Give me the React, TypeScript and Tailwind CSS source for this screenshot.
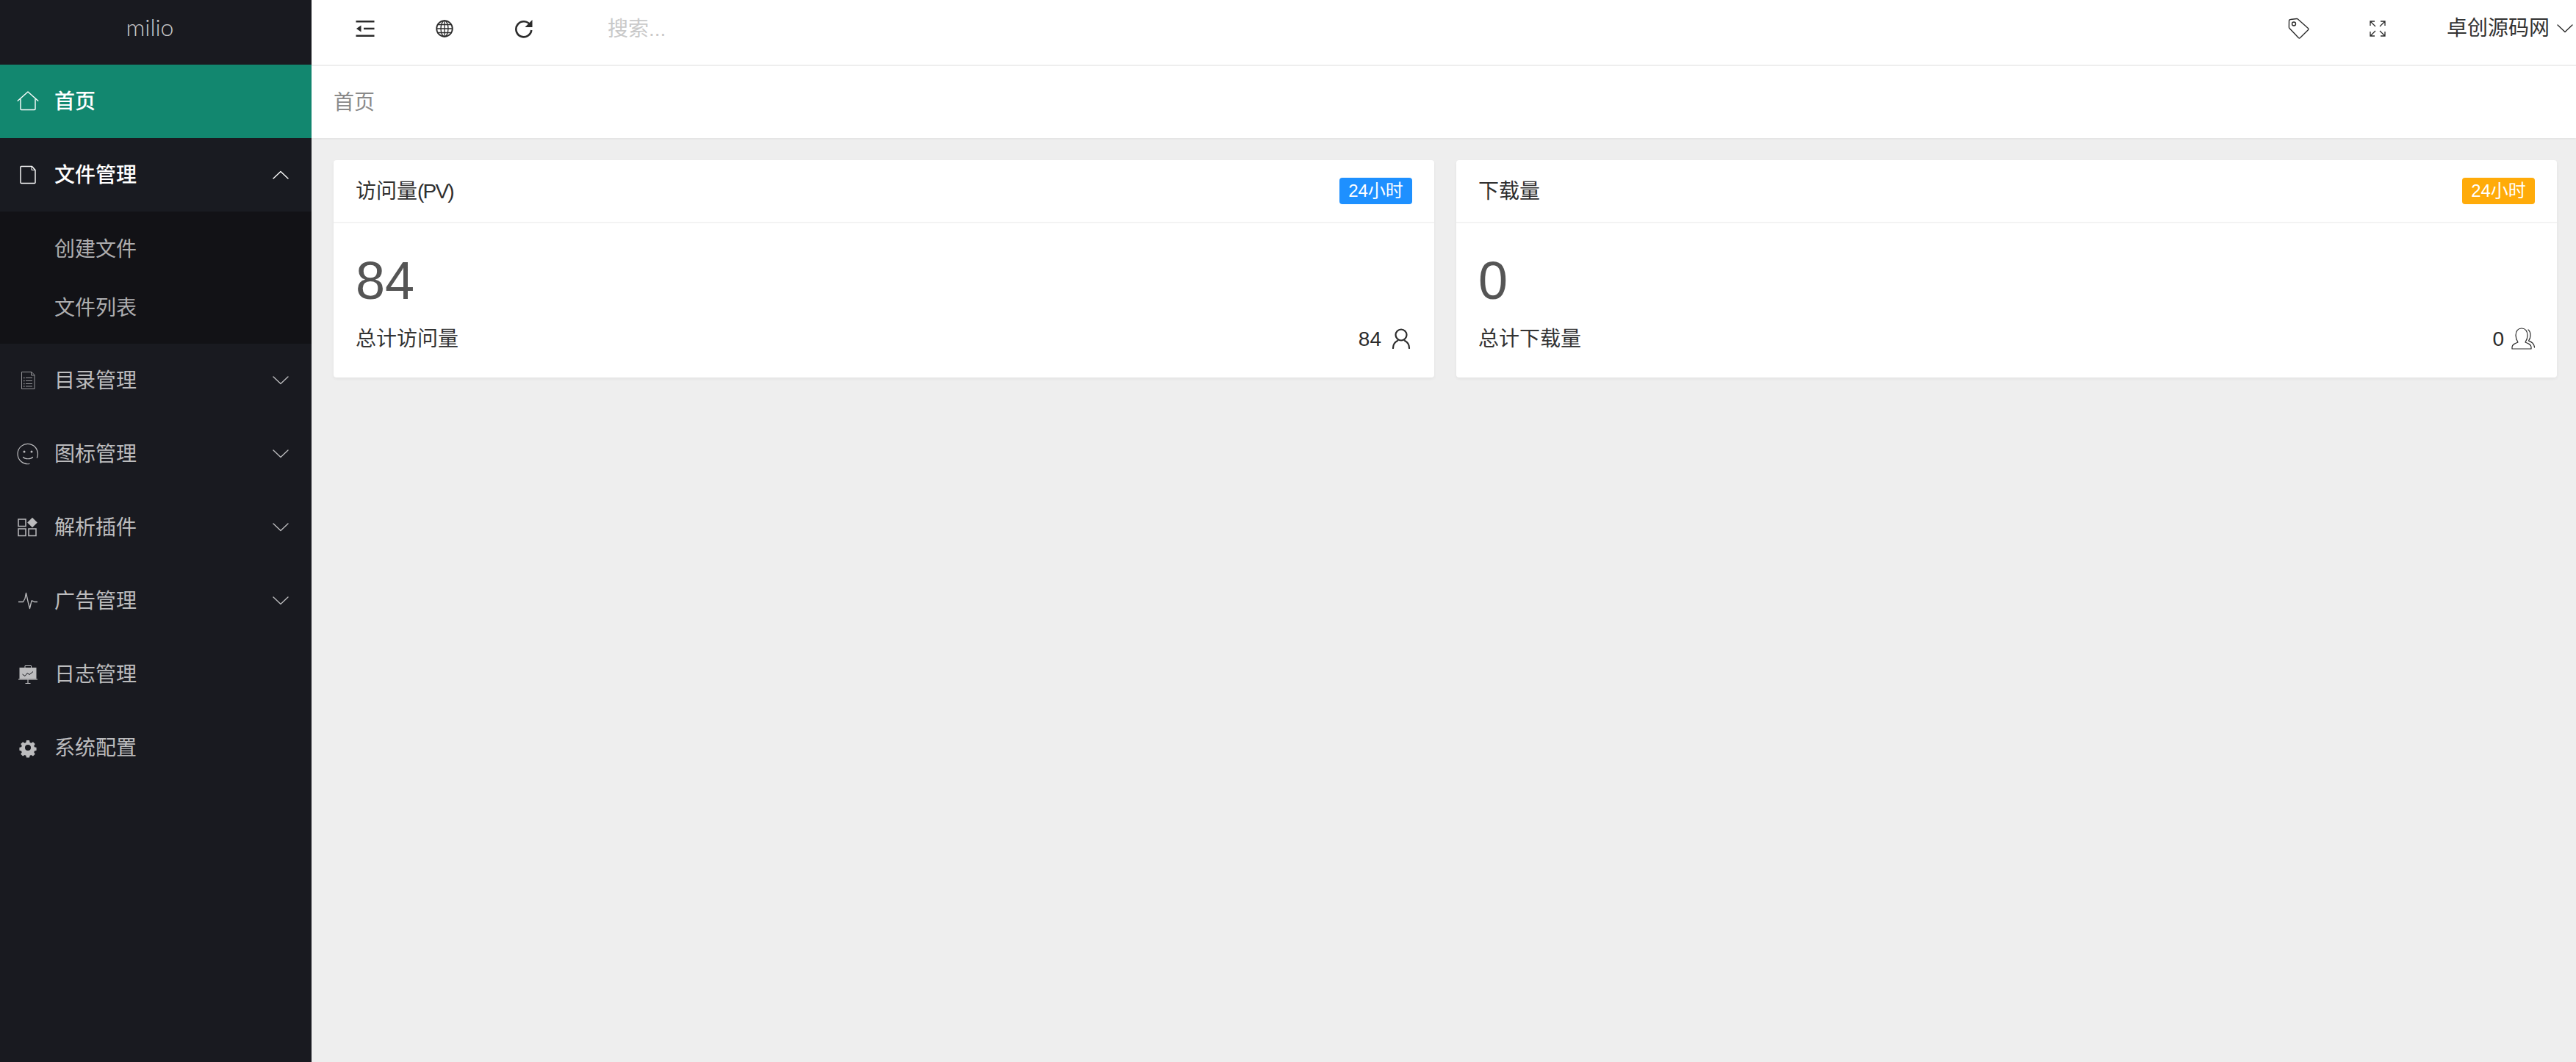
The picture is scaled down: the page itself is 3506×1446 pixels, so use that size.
import type { ReactNode } from 'react';

const svg = 'w-[30px] h-[30px] shrink-0';

const HomeIcon = () => (
  <svg viewBox="0 0 30 30" className={svg} fill="none" stroke="currentColor" strokeWidth="1.4">
    <path d="M1.2 14.2 15 2 28.8 14.2" strokeLinecap="round" strokeLinejoin="round" />
    <path d="M5 11.5V25.5a1 1 0 0 0 1 1h18a1 1 0 0 0 1-1V11.5" />
  </svg>
);
const FileIcon = () => (
  <svg viewBox="0 0 30 30" className={svg} fill="none" stroke="currentColor" strokeWidth="1.4">
    <path d="M5 4.5a1 1 0 0 1 1-1h14.5L25 8.500V25.500a1 1 0 0 1-1 1H6a1 1 0 0 1-1-1Z" strokeLinejoin="round" />
    <path d="M20 3.500V8.500H25" strokeWidth="1" />
  </svg>
);
const ListDocIcon = () => (
  <svg viewBox="0 0 30 30" className={svg} fill="none" stroke="currentColor" strokeWidth="1" opacity="0.75">
    <path d="M6.500 3.500H20L24 7.500V26.500H6.500Z" />
    <path d="M19.500 3.500V8H24" />
    <path d="M12 11.500H21M12 15.500H21M12 19.500H21M12 23H21" />
    <path d="M9 11.500H10.500M9 15.500H10.500M9 19.500H10.500M9 23H10.500" strokeWidth="1.500" />
  </svg>
);
const SmileIcon = () => (
  <svg viewBox="0 0 30 30" className={svg} fill="none" stroke="currentColor" strokeWidth="1.200">
    <path d="M28 18.500A13.700 13.700 0 1 0 19 28.100" strokeLinecap="round" transform="rotate(8 15 15)" />
    <circle cx="10" cy="12" r="1.500" fill="currentColor" stroke="none" />
    <circle cx="20" cy="12" r="1.500" fill="currentColor" stroke="none" />
    <path d="M8.500 19.500C11 22.500 19 22.500 21.500 19.500" strokeLinecap="round" />
  </svg>
);
const AppsIcon = () => (
  <svg viewBox="0 0 30 30" className={svg} fill="currentColor">
    <g fill="none" stroke="currentColor" strokeWidth="1.500">
      <rect x="2" y="4" width="10" height="9.500" />
      <rect x="2" y="17" width="10" height="9.500" />
      <rect x="16" y="17" width="10" height="9.500" />
    </g>
    <path d="M21 1.800 27.800 8.500 21 15.200 14.200 8.500Z" />
  </svg>
);
const PulseIcon = () => (
  <svg viewBox="0 0 30 30" className={svg} fill="none" stroke="currentColor" strokeWidth="1.300">
    <path d="M2 16.500H8.500L11 12 12.500 4.500 15.500 18 17.500 25.500 20 15 22 15.500 23.500 16.500H28" strokeLinejoin="round" />
  </svg>
);
const BoardIcon = () => (
  <svg viewBox="0 0 30 30" className={svg} fill="none">
    <path d="M11 6V3.500H19.500V6" stroke="currentColor" strokeWidth="1" />
    <path d="M3.500 6H26.500V21.500H3.500Z" fill="currentColor" />
    <path d="M2 22H28" stroke="currentColor" strokeWidth="1.200" />
    <path d="M15 22V27.500M11.500 27.500H18.500" stroke="currentColor" strokeWidth="1.200" />
    <path d="M7.500 15 11 17.500 14 13.500 17 15.500 22 11.500" stroke="#191a20" strokeWidth="1" />
  </svg>
);
const CogIcon = () => (
  <svg viewBox="0 0 30 30" className={svg} fill="currentColor">
    <path
      fillRule="evenodd"
      d="M12.500 2.500h5l.8 3.600 2.200 1 3.200-1.900 3.500 3.500-1.900 3.200.9 2.200 3.300.7v5l-3.300.8-.9 2.100 1.900 3.200-3.500 3.500-3.200-1.900-2.200.9-.8 3.600h-5l-.8-3.600-2.200-.9-3.200 1.900-3.500-3.500 1.900-3.200-.9-2.100-3.300-.8v-5l3.300-.7.9-2.200-1.900-3.200 3.500-3.500 3.200 1.900 2.200-1ZM15 10a5 5 0 1 0 0 10 5 5 0 0 0 0-10Z"
      transform="translate(3 3) scale(.8)"
    />
  </svg>
);
const Chevron = ({ up, className }: { up?: boolean; className?: string }) => (
  <svg viewBox="0 0 22 12" className={className ?? 'w-[22px] h-[12px] shrink-0'} fill="none" stroke="currentColor" strokeWidth="1.400">
    <path d={up ? 'M1 11 11 1.500 21 11' : 'M1 1 11 10.500 21 1'} strokeLinecap="round" strokeLinejoin="round" />
  </svg>
);

const navTop = [
  { label: '目录管理', icon: <ListDocIcon />, arrow: true },
  { label: '图标管理', icon: <SmileIcon />, arrow: true },
  { label: '解析插件', icon: <AppsIcon />, arrow: true },
  { label: '广告管理', icon: <PulseIcon />, arrow: true },
  { label: '日志管理', icon: <BoardIcon />, arrow: false },
  { label: '系统配置', icon: <CogIcon />, arrow: false },
];

function NavItem({ label, icon, children, className }: { label: string; icon: ReactNode; children?: ReactNode; className: string }) {
  return (
    <div className={`h-[100px] flex items-center pl-[23px] pr-[31px] ${className}`}>
      {icon}
      <span className="ml-[21px] pt-[2px] flex-1">{label}</span>
      {children}
    </div>
  );
}

function Sidebar() {
  return (
    <aside className="w-[424px] shrink-0 bg-[#191a20] text-[28px] text-[#bcbcbe]">
      <div className="h-[88px] flex items-center justify-center pb-[14px] pr-[16px] text-[32px] font-light text-[#c8c8ca] [font-family:Lato,sans-serif]">
        milio
      </div>
      <NavItem label="首页" icon={<HomeIcon />} className="bg-[#12876f] text-white font-medium" />
      <NavItem label="文件管理" icon={<FileIcon />} className="bg-[#191b21] text-white font-medium">
        <Chevron up />
      </NavItem>
      <div className="bg-[#121216] py-[10px]">
        <div className="h-[80px] pt-[3px] flex items-center pl-[74px] text-[#adadaf]">创建文件</div>
        <div className="h-[80px] pt-[4px] flex items-center pl-[74px] text-[#adadaf]">文件列表</div>
      </div>
      {navTop.map((item) => (
        <NavItem key={item.label} label={item.label} icon={item.icon} className="">
          {item.arrow && <Chevron />}
        </NavItem>
      ))}
    </aside>
  );
}

function Header() {
  return (
    <header className="h-[90px] shrink-0 bg-white border-b-2 border-[#efefef] flex items-center pl-[19px] pb-[10px] text-[#2b2b2b]">
      <div className="w-[108px] flex justify-center">
        <svg viewBox="0 0 26 24" className="w-[26px] h-[24px]" fill="currentColor">
          <rect x="0.500" y="1" width="25" height="2.500" />
          <rect x="0.500" y="20.500" width="25" height="2.500" />
          <rect x="11" y="10.700" width="14.500" height="2.500" />
          <path d="M7.500 7.500V16.500L1 12Z" />
        </svg>
      </div>
      <div className="w-[108px] flex justify-center">
        <svg viewBox="0 0 24 24" className="w-[24px] h-[24px]" fill="none" stroke="currentColor" strokeWidth="1.300">
          <circle cx="12" cy="12" r="10.800" strokeWidth="1.800" />
          <ellipse cx="12" cy="12" rx="5" ry="10.800" />
          <path d="M12 1V23M1.500 12H22.500M3 6.500H21M3 17.500H21" />
        </svg>
      </div>
      <div className="w-[108px] flex justify-center">
        <svg viewBox="0 0 24 26" className="w-[24px] h-[26px]" fill="none">
          <path d="M20.500 7.800A10.500 10.500 0 1 0 22.300 15" stroke="currentColor" strokeWidth="2.600" />
          <path d="M23.500 1V11H13.500Z" fill="currentColor" />
        </svg>
      </div>
      <span className="ml-[60px] mt-[2px] text-[28px] text-[#c9c9c9]">搜索...</span>
      <div className="ml-auto flex items-center">
        <div className="w-[108px] flex justify-center">
          <svg viewBox="0 0 30 30" className="w-[30px] h-[30px]" fill="none" stroke="currentColor" strokeWidth="1.400">
            <path d="M2.500 4.500a2 2 0 0 1 2-2L13 1.500a2 2 0 0 1 1.400.5l14 12.500a1.500 1.500 0 0 1 0 2.200L17.500 27.500a1.500 1.500 0 0 1-2.100 0L3 14.500a2 2 0 0 1-.6-1.500Z" strokeLinejoin="round" />
            <circle cx="9" cy="8.500" r="2.500" />
          </svg>
        </div>
        <div className="w-[108px] flex justify-center">
          <svg viewBox="0 0 24 24" className="w-[24px] h-[24px]" fill="none" stroke="currentColor" strokeWidth="1.300">
            <path d="M2 8V2H8M2 2 9 9M16 2H22V8M22 2 15 9M2 16V22H8M2 22 9 15M16 22H22V16M22 22 15 15" />
          </svg>
        </div>
        <span className="ml-[40px] text-[28px] text-[#333]">卓创源码网</span>
        <Chevron className="ml-[10px] mr-[4px] w-[22px] h-[12px] shrink-0" />
      </div>
    </header>
  );
}

function StatCard({ title, badge, badgeBg, value, label, total, icon }: {
  title: ReactNode;
  badge: string;
  badgeBg: string;
  value: string;
  label: string;
  total: string;
  icon: ReactNode;
}) {
  return (
    <div className="bg-white rounded-[4px] shadow-[0_2px_4px_rgba(0,0,0,0.05)]">
      <div className="h-[86px] border-b-2 border-[#f3f3f3] flex items-center justify-between px-[30px] text-[28px] text-[#2f2f2f]">
        <span className="pt-[2px]">{title}</span>
        <span className={`h-[36px] w-[99px] rounded-[4px] flex items-center justify-center text-[24px] text-white ${badgeBg}`}>{badge}</span>
      </div>
      <div className="px-[30px] pt-[42px] pb-[32px]">
        <p className="text-[72px] leading-[72px] text-[#555]">{value}</p>
        <div className="mt-[24px] h-[40px] flex items-center justify-between text-[28px] text-[#333]">
          <span>{label}</span>
          <span className="flex items-center gap-[8px] text-[#2b2b2b]">
            {total}
            {icon}
          </span>
        </div>
      </div>
    </div>
  );
}

export default function App() {
  return (
    <div className="flex h-screen w-full overflow-hidden bg-[#eeeeee] [font-family:'Liberation_Sans','Noto_Sans_CJK_SC',sans-serif]">
      <Sidebar />
      <div className="flex-1 flex flex-col min-w-0">
        <Header />
        <div className="h-[98px] shrink-0 bg-white flex items-center pl-[30px] pt-[2px] text-[28px] text-[#8a8a8a] shadow-[0_1px_3px_rgba(0,0,0,0.06)]">
          首页
        </div>
        <main className="grid grid-cols-2 gap-[30px] pt-[30px] pl-[30px] pr-[26px]">
          <StatCard
            title={<>访问量<span className="tracking-[-1.800px]">(PV)</span></>}
            badge="24小时"
            badgeBg="bg-[#1e90ff]"
            value="84"
            label="总计访问量"
            total="84"
            icon={
              <svg viewBox="0 0 26 28" className="w-[26px] h-[28px] ml-[6px] mr-[2px] -mt-[3px]" fill="none" stroke="#2b2b2b" strokeWidth="2.200">
                <circle cx="13" cy="9" r="7.500" />
                <path d="M2 27C2 22 5 18.500 8 17M24 27C24 22 21 18.500 18 17" strokeLinecap="round" />
              </svg>
            }
          />
          <StatCard
            title="下载量"
            badge="24小时"
            badgeBg="bg-[#ffab09]"
            value="0"
            label="总计下载量"
            total="0"
            icon={
              <svg viewBox="0 0 32 30" className="w-[32px] h-[30px] ml-[2px] -mt-[3px]" fill="none" stroke="#2b2b2b" strokeWidth="1.200">
                <path d="M1 29V26.500C1 23 5 21.500 9 20 7 17 6 14 6 10.500 6 5 9 1 14 1S22 5 22 10.500C22 14 21 17 19 20 23 21.500 27 23 27 26.500V29Z" strokeLinejoin="round" />
                <path d="M23 3C25.500 5 26 8 26 10.500 26 13.500 25 16 23.500 18 27 19.500 31 21 31.500 27" strokeLinecap="round" />
              </svg>
            }
          />
        </main>
      </div>
    </div>
  );
}
